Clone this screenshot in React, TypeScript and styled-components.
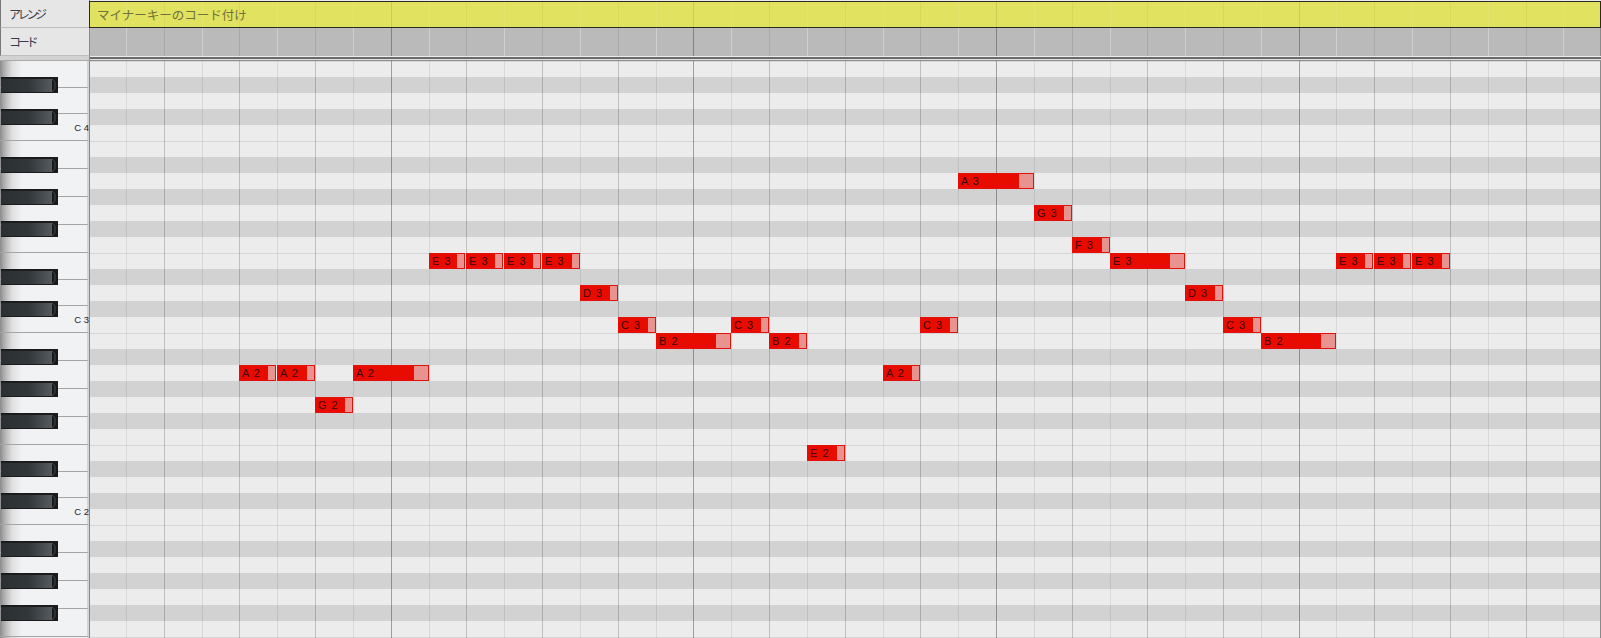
import styled, { createGlobalStyle } from "styled-components";

const GlobalStyle = createGlobalStyle`
  html, body {
    margin: 0;
    padding: 0;
    background: #ececec;
  }
  body {
    font-family: "Liberation Sans", "Noto Sans CJK JP", sans-serif;
  }
`;

const STEP = 37.83;
const ORIGIN = 88.6;
const STEP_COUNT = 40;
const ROLL_LEFT = 90;

const PITCHES = ["C", "C#", "D", "D#", "E", "F", "F#", "G", "G#", "A", "A#", "B"];

// top row is E4, going down to E1
const rows: { name: string; octave: number }[] = [];
for (let midi = 4 * 12 + 4; midi >= 12 + 4; midi--) {
  rows.push({ name: PITCHES[midi % 12], octave: Math.floor(midi / 12) });
}

const stepX = (n: number) => Math.floor(ORIGIN + STEP * n);

type NoteData = { pitch: string; step: number; len?: number };

const notes: NoteData[] = [
  { pitch: "A2", step: 4 },
  { pitch: "A2", step: 5 },
  { pitch: "G2", step: 6 },
  { pitch: "A2", step: 7, len: 2 },
  { pitch: "E3", step: 9 },
  { pitch: "E3", step: 10 },
  { pitch: "E3", step: 11 },
  { pitch: "E3", step: 12 },
  { pitch: "D3", step: 13 },
  { pitch: "C3", step: 14 },
  { pitch: "B2", step: 15, len: 2 },
  { pitch: "C3", step: 17 },
  { pitch: "B2", step: 18 },
  { pitch: "E2", step: 19 },
  { pitch: "A2", step: 21 },
  { pitch: "C3", step: 22 },
  { pitch: "A3", step: 23, len: 2 },
  { pitch: "G3", step: 25 },
  { pitch: "F3", step: 26 },
  { pitch: "E3", step: 27, len: 2 },
  { pitch: "D3", step: 29 },
  { pitch: "C3", step: 30 },
  { pitch: "B2", step: 31, len: 2 },
  { pitch: "E3", step: 33 },
  { pitch: "E3", step: 34 },
  { pitch: "E3", step: 35 },
];

const whiteKeys = [26.67, 26.67, 26.66, 28, 28, 28, 28];
const blackKeyTops = [17, 49, 97, 129, 161, 209, 241, 289, 321, 353, 401, 433, 481, 513, 545];

const Page = styled.div`
  width: 1601px;
  height: 638px;
  overflow: hidden;
  display: flex;
  flex-direction: column;
  background: #ececec;
`;

const HeaderRow = styled.div<{ $height: number }>`
  display: flex;
  height: ${(p) => p.$height}px;
  flex: none;
`;

const LabelCell = styled.div`
  width: 80px;
  flex: none;
  display: flex;
  align-items: center;
  padding-left: 8px;
  background: #e6e6e6;
  border-left: 1px solid #777;
  border-right: 1px solid #8a8a8a;
  border-bottom: 1px solid #bdbdbd;
  font-family: "Noto Sans CJK JP", sans-serif;
  font-size: 12px;
  letter-spacing: -3.3px;
  color: #3a3a4a;
`;

const ArrangeTrack = styled.div`
  position: relative;
  flex: 1;
  margin: 1px 0 0 -1px;
  background: #e1e25f;
  border: 1px solid #2a2a20;
  padding-left: 7px;
  display: flex;
  align-items: center;
  font-family: "Noto Sans CJK JP", sans-serif;
  font-size: 12.5px;
  color: #70703c;
`;

const ChordTrack = styled.div`
  position: relative;
  flex: 1;
  background: #bababa;
  border-right: 1px solid #8a8a8a;
`;

const Divider = styled.div`
  display: flex;
  flex: none;
  height: 5px;
`;

const DividerLabel = styled.div`
  width: 89px;
  flex: none;
  background: #d2d2d2;
  border-right: 1px solid #8a8a8a;
  border-bottom: 1px solid #a8a8a8;
  height: 4px;
`;

const DividerLines = styled.div`
  flex: 1;
  background: #dcdcdc;
  border-top: 2px solid #6a6a6a;
  border-bottom: 1px solid #8f8f8f;
  margin-top: 1px;
`;

const Body = styled.div`
  flex: 1;
  display: flex;
  min-height: 0;
`;

const Keyboard = styled.div`
  position: relative;
  width: 89px;
  flex: none;
  overflow: hidden;
  border-right: 1px solid #8a8a8a;
`;

const WhiteKey = styled.div`
  flex: none;
  box-sizing: border-box;
  display: flex;
  justify-content: flex-end;
  align-items: flex-end;
  padding-bottom: 7px;
  border-bottom: 1px solid #a4a4a4;
  border-right: 2px solid #d4d4d4;
  background: linear-gradient(90deg, #8c8c8c 0, #b4b4b4 5px, #dedfe0 12px, #f1f2f4 22px, #f1f2f4 100%);
`;

const KeyLabel = styled.span`
  margin-right: -2px;
  font-size: 9.5px;
  line-height: 10px;
  word-spacing: 0;
  color: #1c2430;
`;

const BlackKey = styled.div`
  position: absolute;
  left: 1px;
  width: 57px;
  height: 16px;
  display: flex;
  box-sizing: border-box;
  border-top: 2px solid #191b1d;
  border-bottom: 1px solid #191b1d;
`;

const BlackKeyBody = styled.div`
  flex: 1;
  background: linear-gradient(90deg, #2a2f32 0, #32373a 28px, #565b5f 100%);
`;

const BlackKeyCap = styled.svg`
  flex: none;
  display: block;
  width: 6px;
  height: 13px;
`;

const Roll = styled.div`
  position: relative;
  flex: 1;
  overflow: hidden;
  border-right: 1px solid #8a8a8a;
`;

const RollRow = styled.div<{ $sharp: boolean; $edge: boolean }>`
  height: 16px;
  box-sizing: border-box;
  background: ${(p) => (p.$sharp ? "#d2d2d2" : "#ececec")};
  border-top: ${(p) => (p.$edge ? "1px solid #d6d6d6" : "none")};
`;

const BeatOverlay = styled.div`
  position: absolute;
  top: 0;
  bottom: 0;
  left: 0;
  display: flex;
  pointer-events: none;
`;

type BeatKind = "bar" | "beat" | "sub";

const rollLines: Record<BeatKind, string> = {
  bar: "rgba(0, 0, 0, 0.33)",
  beat: "rgba(0, 0, 0, 0.19)",
  sub: "rgba(0, 0, 0, 0.08)",
};

const chordLines: Record<BeatKind, string> = {
  bar: "rgba(0, 0, 0, 0.3)",
  beat: "rgba(0, 0, 0, 0.09)",
  sub: "rgba(255, 255, 255, 0.3)",
};

const arrangeLines: Record<BeatKind, string> = {
  bar: "rgba(0, 0, 0, 0.1)",
  beat: "rgba(0, 0, 0, 0.04)",
  sub: "rgba(255, 255, 255, 0.1)",
};

const Beat = styled.div<{ $color: string }>`
  flex: none;
  box-sizing: border-box;
  border-right: 1px solid ${(p) => p.$color};
`;

const NoteBox = styled.div`
  position: absolute;
  height: 16px;
  box-sizing: border-box;
  display: flex;
  justify-content: space-between;
  padding-left: 3px;
  border: 1px solid #e5100a;
  border-left: none;
  background: #e80c00;
`;

const NoteLabel = styled.span`
  font-size: 11px;
  line-height: 14px;
  word-spacing: 2px;
  color: #3a0403;
  white-space: nowrap;
`;

const NoteHandle = styled.div`
  flex: none;
  background: #e89390;
`;

const BeatLines = ({ lines }: { lines: Record<BeatKind, string> }) => {
  const beats = [];
  for (let n = 1; n < STEP_COUNT; n++) {
    const kind: BeatKind = n % 8 === 0 ? "bar" : n % 2 === 0 ? "beat" : "sub";
    const width = stepX(n) - (n === 1 ? ROLL_LEFT - 1 : stepX(n - 1));
    beats.push(<Beat key={n} $color={lines[kind]} style={{ width }} />);
  }
  return <BeatOverlay>{beats}</BeatOverlay>;
};

const Note = ({ note }: { note: NoteData }) => {
  const len = note.len ?? 1;
  const row = rows.findIndex((r) => `${r.name}${r.octave}` === note.pitch);
  const left = stepX(note.step);
  const end = note.step + len;
  const touching = notes.some((n) => n.pitch === note.pitch && n.step === end);
  const width = stepX(end) - left - (touching ? 1 : 0);
  return (
    <NoteBox style={{ left: left - ROLL_LEFT, top: row * 16, width }}>
      <NoteLabel>{`${note.pitch[0]} ${note.pitch[1]}`}</NoteLabel>
      <NoteHandle style={{ width: len * 7 }} />
    </NoteBox>
  );
};

const App = () => {
  const keys = [];
  let octave = 4;
  for (let i = 0; i < 22; i++) {
    const height = whiteKeys[i % 7];
    const isC = i % 7 === 2;
    keys.push(
      <WhiteKey key={i} style={{ height }}>
        {isC && <KeyLabel>{`C ${octave}`}</KeyLabel>}
      </WhiteKey>
    );
    if (isC) octave--;
  }

  return (
    <Page>
      <GlobalStyle />
      <HeaderRow $height={28}>
        <LabelCell>アレンジ</LabelCell>
        <ArrangeTrack>
          マイナーキーのコード付け
          <BeatLines lines={arrangeLines} />
        </ArrangeTrack>
      </HeaderRow>
      <HeaderRow $height={28}>
        <LabelCell>コード</LabelCell>
        <ChordTrack>
          <BeatLines lines={chordLines} />
        </ChordTrack>
      </HeaderRow>
      <Divider>
        <DividerLabel />
        <DividerLines />
      </Divider>
      <Body>
        <Keyboard>
          {keys}
          {blackKeyTops.map((top) => (
            <BlackKey key={top} style={{ top: top - 1 }}>
              <BlackKeyBody />
              <BlackKeyCap viewBox="0 0 6 13">
                <rect width="6" height="13" fill="#17191b" />
                <path d="M0 0 L3 3 V10 L0 13" fill="none" stroke="#44484b" strokeWidth="1" />
              </BlackKeyCap>
            </BlackKey>
          ))}
        </Keyboard>
        <Roll>
          {rows.map((r) => (
            <RollRow
              key={`${r.name}${r.octave}`}
              $sharp={r.name.length > 1}
              $edge={r.name === "E" || r.name === "B"}
            />
          ))}
          <BeatLines lines={rollLines} />
          {notes.map((n) => (
            <Note key={`${n.pitch}-${n.step}`} note={n} />
          ))}
        </Roll>
      </Body>
    </Page>
  );
};

export default App;
